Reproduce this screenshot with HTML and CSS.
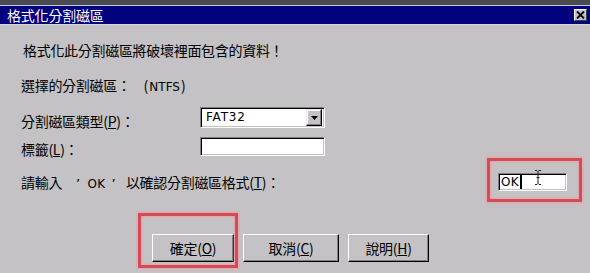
FILE: index.html
```html
<!DOCTYPE html>
<html lang="zh-Hant">
<head>
<meta charset="utf-8">
<title>格式化分割磁區</title>
<link rel="stylesheet" href="styles.css">
</head>
<body>
<div class="topstrip"></div>
<div class="titlebar">
  <span class="title">格式化分割磁區</span>
  <span class="close"><svg width="9" height="8" viewBox="0 0 9 8"><path d="M1 0.5 L8 7.5 M8 0.5 L1 7.5" stroke="#000" stroke-width="1.8"/></svg></span>
</div>
<div class="content">
  <p class="msg">格式化此分割磁區將破壞裡面包含的資料！</p>
  <p class="info">選擇的分割磁區：<span class="ntfs"><span class="par">(</span>NTFS<span class="par">)</span></span></p>
  <div class="row r1">
    <span class="label">分割磁區類型(<u>P</u>)：</span>
    <div class="combo"><span class="combo-text">FAT32</span><span class="drop"><svg width="7" height="4" viewBox="0 0 7 4"><path d="M0 0 H7 L3.5 4 Z" fill="#000"/></svg></span></div>
  </div>
  <div class="row r2">
    <span class="label">標籤(<u>L</u>)：</span>
    <div class="field"></div>
  </div>
  <div class="row r3">
    <span class="label">請輸入<span class="q"><span class="qm qm1">’</span>OK<span class="qm qm2">’</span></span>以確認分割磁區格式(<u>T</u>)：</span>
    <div class="okfield"><span class="oktext">OK</span><span class="caret"></span></div>
  </div>
  <div class="buttons">
    <button class="btn b1">確定(<u>O</u>)</button>
    <button class="btn b2">取消(<u>C</u>)</button>
    <button class="btn b3">說明(<u>H</u>)</button>
  </div>
</div>
<div class="mark mark-ok"></div>
<div class="mark mark-btn"></div>
<svg class="ibeam" width="8" height="15" viewBox="0 0 8 15"><path d="M1 0.5 H3 L4 1.5 L5 0.5 H7 M4 1.5 V13.5 M1 14.5 H3 L4 13.5 L5 14.5 H7 M2.5 7.5 H5.5" stroke="#222" stroke-width="1" fill="none"/></svg>
</body>
</html>
```
FILE: styles.css
```css
html, body {
  margin: 0;
  padding: 0;
}
body {
  width: 590px;
  height: 273px;
  overflow: hidden;
  background: #c4c2c4;
  font-family: "Noto Sans CJK TC", "Liberation Sans", sans-serif;
  font-size: 14px;
  color: #000;
  position: relative;
}
.topstrip {
  height: 5px;
  background: #4a4a51;
  border-bottom: 1px solid #c8c8e4;
}
.titlebar {
  height: 18px;
  background: #02027e;
  border-bottom: 1px solid #d4d4e4;
  display: flex;
  align-items: center;
  justify-content: space-between;
  padding: 0 3px 0 7px;
}
.title {
  color: #fff;
  font-size: 14px;
  line-height: 18px;
  letter-spacing: -0.2px;
}
.close {
  width: 13px;
  height: 12px;
  box-sizing: border-box;
  background: #c4c2c4;
  border-top: 1px solid #fff;
  border-left: 1px solid #fff;
  border-right: 1px solid #404040;
  border-bottom: 1px solid #404040;
  display: flex;
  align-items: center;
  justify-content: center;
}
.content {
  padding: 15px 23px 0 21px;
}
.msg {
  margin: 0 0 0 2px;
  line-height: 20px;
  letter-spacing: -0.3px;
}
.info {
  margin: 15px 0 0 0;
  line-height: 20px;
  letter-spacing: -0.3px;
}
.ntfs {
  margin-left: 12px;
  font-family: "DejaVu Sans", sans-serif;
  font-size: 12px;
  letter-spacing: 0;
}
.par {
  font-family: "Noto Sans CJK TC", sans-serif;
  font-size: 14px;
  margin: 0 1px;
}
.row {
  display: flex;
  align-items: flex-end;
}
.label {
  line-height: 16px;
  margin-bottom: -1px;
  letter-spacing: -0.3px;
}
.r1, .r2 {
  display: grid;
  grid-template-columns: 179px 125px;
  align-items: end;
}
.r1 { margin-top: 10px; }
.r2 { margin-top: 9px; }
.r3 {
  margin-top: 17px;
  justify-content: space-between;
}
.q {
  margin: 0 10px 0 14px;
  font-family: "DejaVu Sans", sans-serif;
  font-size: 12px;
  letter-spacing: 0.3px;
}
.qm {
  font-family: "DejaVu Sans", sans-serif;
  font-size: 13px;
}
.qm1 { margin-right: 7px; }
.qm2 { margin-left: 6px; }
.combo, .field, .okfield {
  box-sizing: border-box;
  background: #fff;
  border-top: 1px solid #808080;
  border-left: 1px solid #808080;
  border-right: 1px solid #fff;
  border-bottom: 1px solid #fff;
  box-shadow: inset 1px 1px 0 #000, inset -1px -1px 0 #c4c2c4;
}
.combo {
  height: 21px;
  display: flex;
  align-items: center;
  justify-content: space-between;
  padding: 2px 2px 2px 5px;
}
.combo-text {
  font-family: "DejaVu Sans", sans-serif;
  font-size: 12px;
  letter-spacing: 0.8px;
  line-height: 15px;
}
.drop {
  width: 16px;
  height: 17px;
  box-sizing: border-box;
  background: #c4c2c4;
  border-top: 1px solid #e8e8e8;
  border-left: 1px solid #e8e8e8;
  border-right: 1px solid #000;
  border-bottom: 1px solid #000;
  box-shadow: inset -1px -1px 0 #808080, inset 1px 1px 0 #fff;
  display: flex;
  align-items: center;
  justify-content: center;
}
.field {
  height: 19px;
}
.okfield {
  width: 69px;
  height: 18px;
  display: flex;
  align-items: center;
  padding-left: 2px;
}
.oktext {
  font-family: "DejaVu Sans", sans-serif;
  font-size: 12px;
  line-height: 14px;
  letter-spacing: 0.3px;
}
.caret {
  width: 2px;
  height: 14px;
  background: #000;
  margin-left: 1px;
}
.buttons {
  display: flex;
  gap: 9px;
  margin: 43px 0 0 131px;
}
.btn {
  height: 28px;
  box-sizing: border-box;
  background: #c4c2c4;
  font-family: "Noto Sans CJK TC", "Liberation Sans", sans-serif;
  font-size: 14px;
  color: #000;
  padding: 0;
  border-top: 1px solid #fff;
  border-left: 1px solid #fff;
  border-right: 1px solid #000;
  border-bottom: 1px solid #000;
  box-shadow: inset -1px -1px 0 #808080;
  letter-spacing: -0.3px;
}
.b1 { width: 82px; }
.b2 { width: 96px; }
.b3 { width: 81px; }
.mark {
  position: absolute;
  box-sizing: border-box;
  border: 3px solid #d24b57;
  box-shadow: 0 0 2px 1px #eaa0a8, inset 0 0 2px 1px #eaa0a8;
}
.mark-ok {
  left: 487px;
  top: 158px;
  width: 95px;
  height: 44px;
}
.mark-btn {
  left: 138px;
  top: 213px;
  width: 100px;
  height: 55px;
}
.ibeam {
  position: absolute;
  left: 534px;
  top: 170px;
}
```
